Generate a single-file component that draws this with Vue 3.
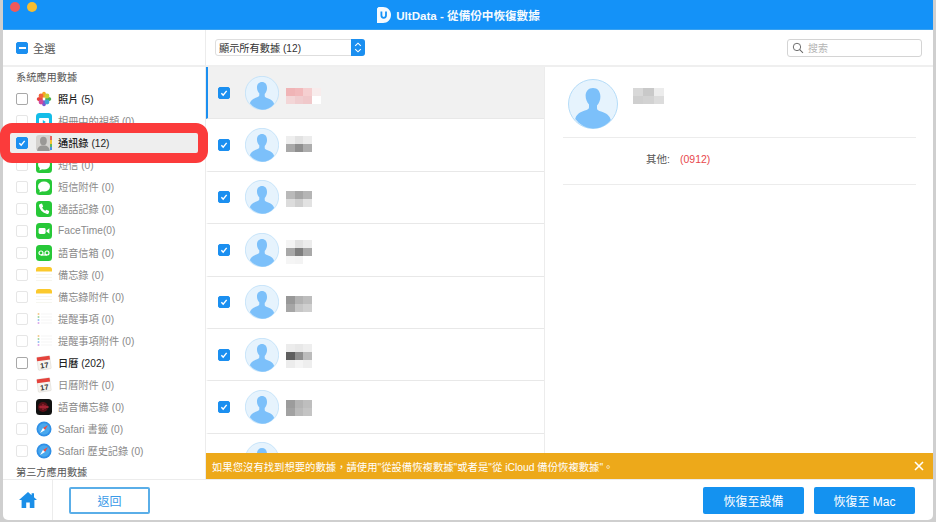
<script setup>
const systemRows = [
  { icon: 'photos', label: '照片 (5)', on: true },
  { icon: 'video', label: '相冊中的視頻 (0)' },
  { icon: 'contacts', label: '通訊錄 (12)', on: true, checked: true },
  { icon: 'message', label: '短信 (0)' },
  { icon: 'message', label: '短信附件 (0)' },
  { icon: 'phone', label: '通話記錄 (0)' },
  { icon: 'facetime', label: 'FaceTime(0)' },
  { icon: 'voicemail', label: '語音信箱 (0)' },
  { icon: 'notes', label: '備忘錄 (0)' },
  { icon: 'notes', label: '備忘錄附件 (0)' },
  { icon: 'reminders', label: '提醒事項 (0)' },
  { icon: 'reminders', label: '提醒事項附件 (0)' },
  { icon: 'calendar', label: '日曆 (202)', on: true },
  { icon: 'calendar', label: '日曆附件 (0)' },
  { icon: 'memo', label: '語音備忘錄 (0)' },
  { icon: 'safari', label: 'Safari 書籤 (0)' },
  { icon: 'safari', label: 'Safari 歷史記錄 (0)' }
]

// blurred names: top is the shift from the row centre, lines are the mosaic colours
const contacts = [
  { top: 6, lines: [['#f0b4b6', '#f2b9bb', '#f5cfd0', '#f8ecec'], ['#f3d6d7', '#f0cdcf', '#f0c8ca', '#fff']] },
  { top: -2, lines: [['#eeeeee', '#e2e2e2', '#ececec'], ['#a9a9a9', '#8f8f8f', '#adadad']] },
  { top: 4, lines: [['#b9b9b9', '#a6a6a6', '#b5b5b5'], ['#dcdcdc', '#cfcfcf', '#e2e2e2']] },
  { top: 4, lines: [['#f4f4f4', '#e2e2e2', '#ececec'], ['#a8a8a8', '#7f7f7f', '#a9a9a9'], ['#f5f5f5', '#f3f3f3', '#fff']] },
  { top: 4, lines: [['#989898', '#b2b2b2', '#bdbdbd'], ['#a6a6a6', '#c6c6c6', '#cfcfcf']] },
  { top: 2, lines: [['#ececec', '#e8e8e8', '#eeeeee'], ['#5f5f5f', '#8f8f8f', '#bcbcbc'], ['#ececec', '#f4f4f4', '#eeeeee']] },
  { top: 2, lines: [['#9c9c9c', '#b4b4b4', '#bebebe'], ['#a2a2a2', '#bababa', '#c4c4c4']] },
  { top: 0, lines: [] }
]

const detailName = [['#d8d8d8', '#c9c9c9', '#ececec'], ['#cfcfcf', '#d2d2d2', '#dcdcdc']]
</script>

<template>
  <div class="screen">
    <div class="window">
      <header class="titlebar">
        <span class="light light--red"></span>
        <span class="light light--yellow"></span>
        <div class="title">
          <svg class="logo" viewBox="0 0 14 16">
            <path d="M0 1.5 1.5 0H6c4.500 0 8 3.400 8 8s-3.500 8-8 8H0z" fill="#fff" />
            <path d="M4.400 4.500v3.800c0 1.600 1 2.500 2.300 2.500S9 9.900 9 8.300V4.500" fill="none" stroke="#1492f8" stroke-width="1.800" />
          </svg>
          <span>UltData - 從備份中恢復數據</span>
        </div>
      </header>

      <div class="main">
        <aside class="sidebar">
          <div class="select-all">
            <span class="check check--mixed"></span>
            <span>全選</span>
          </div>
          <div class="side-list">
            <div class="group">系統應用數據</div>
            <div
              v-for="row in systemRows"
              :key="row.label"
              class="side-row"
              :class="{ 'side-row--on': row.on, 'side-row--checked': row.checked }"
            >
              <span class="check" :class="{ 'check--on': row.checked }">
                <svg v-if="row.checked" viewBox="0 0 12 12"><path d="M2.800 6.300 5 8.500l4.200-5" fill="none" stroke="#fff" stroke-width="1.700" /></svg>
              </span>
              <svg class="app-icon" viewBox="0 0 16 16">
                <template v-if="row.icon === 'photos'">
                  <ellipse cx="8" cy="3.800" rx="2" ry="3" fill="#f5a623" />
                  <ellipse cx="8" cy="12.200" rx="2" ry="3" fill="#7a5bd0" />
                  <ellipse cx="3.800" cy="8" rx="3" ry="2" fill="#e8413c" />
                  <ellipse cx="12.200" cy="8" rx="3" ry="2" fill="#4cb050" />
                  <circle cx="5" cy="5" r="2.400" fill="#f0643c" />
                  <circle cx="11" cy="5" r="2.400" fill="#c8d035" />
                  <circle cx="5" cy="11" r="2.400" fill="#d04a9c" />
                  <circle cx="11" cy="11" r="2.400" fill="#3fa6d8" />
                </template>
                <template v-else-if="row.icon === 'video'">
                  <rect width="16" height="16" rx="3.500" fill="#14bde8" />
                  <rect x="3" y="5" width="10" height="8" rx="1" fill="#fff" />
                  <path d="M6.800 7v4l3-2z" fill="#14bde8" />
                </template>
                <template v-else-if="row.icon === 'contacts'">
                  <rect width="16" height="16" rx="3" fill="#d4d2cf" />
                  <path d="M14 1h2v4h-2z" fill="#e8625a" />
                  <path d="M14 5h2v4h-2z" fill="#f2c230" />
                  <path d="M14 9h2v3h-2z" fill="#5cb85c" />
                  <path d="M14 12h2v3h-2z" fill="#4a90e2" />
                  <ellipse cx="7.400" cy="6" rx="3.400" ry="4.200" fill="#9a9896" />
                  <path d="M1.200 16c0-3.400 2.400-4.800 4.400-5.400h3.600c2 .6 4.400 2 4.400 5.400z" fill="#9a9896" />
                </template>
                <template v-else-if="row.icon === 'message'">
                  <rect width="16" height="16" rx="3.500" fill="#27c838" />
                  <ellipse cx="8" cy="7.600" rx="6" ry="5" fill="#fff" />
                  <path d="M4 10.500 3.400 13.600 7 11.800z" fill="#fff" />
                </template>
                <template v-else-if="row.icon === 'phone'">
                  <rect width="16" height="16" rx="3.500" fill="#27c838" />
                  <path d="M4.200 3 6 2.600l1.200 2.800-1 1c.6 1.500 1.600 2.600 3.200 3.400l1-1 2.800 1.300-.4 1.800c-.2.800-1 1.200-1.800 1C6.400 11.700 3.900 8.900 3 4.800 2.900 4 3.400 3.200 4.200 3z" fill="#fff" />
                </template>
                <template v-else-if="row.icon === 'facetime'">
                  <rect width="16" height="16" rx="3.500" fill="#27c838" />
                  <rect x="2.600" y="5" width="7" height="6" rx="1.400" fill="#fff" />
                  <path d="M10.400 7.400 13.400 5.200v5.600L10.400 8.600z" fill="#fff" />
                </template>
                <template v-else-if="row.icon === 'voicemail'">
                  <rect width="16" height="16" rx="3.500" fill="#27c838" />
                  <circle cx="5" cy="8" r="2" fill="none" stroke="#fff" stroke-width="1.200" />
                  <circle cx="11" cy="8" r="2" fill="none" stroke="#fff" stroke-width="1.200" />
                  <path d="M5 10h6" stroke="#fff" stroke-width="1.200" />
                </template>
                <template v-else-if="row.icon === 'notes'">
                  <path d="M0 4.500V2.500A2.500 2.500 0 0 1 2.500 0h11A2.500 2.500 0 0 1 16 2.500v2z" fill="#fbc92c" />
                  <path d="M0 7.500h16M0 10.500h16M0 13.500h16" stroke="#f2f2ea" stroke-width=".7" />
                </template>
                <template v-else-if="row.icon === 'reminders'">
                  <circle cx="2.500" cy="3" r="1" fill="#f5c98c" />
                  <circle cx="2.500" cy="6" r="1" fill="#9ed49e" />
                  <circle cx="2.500" cy="9" r="1" fill="#94bff0" />
                  <circle cx="2.500" cy="12" r="1" fill="#d9a9e8" />
                  <path d="M5 3h11M5 6h11M5 9h11M5 12h11" stroke="#f0f0f0" stroke-width=".7" />
                </template>
                <template v-else-if="row.icon === 'calendar'">
                  <g transform="rotate(-8 8 8)">
                    <rect x="1.500" y="1.500" width="13" height="13" rx="1" fill="#f6f4f0" stroke="#d8d5d0" stroke-width=".5" />
                    <rect x="1.500" y="1.500" width="13" height="3.800" fill="#e4433c" />
                    <text x="8" y="13" text-anchor="middle" font-size="7.500" font-weight="700" fill="#333">17</text>
                  </g>
                </template>
                <template v-else-if="row.icon === 'memo'">
                  <rect width="16" height="16" rx="3.500" fill="#111" />
                  <circle cx="7" cy="8" r="5" fill="#5a1018" />
                  <path d="M3 8h10M5 6.500v3M7 5v6M9 6v4M11 7v2" stroke="#e0334a" stroke-width=".7" />
                </template>
                <template v-else-if="row.icon === 'safari'">
                  <circle cx="8" cy="8" r="7.500" fill="#2f8fe6" />
                  <circle cx="8" cy="8" r="5.800" fill="#48a8ee" />
                  <path d="M12 4 9 9 7 7z" fill="#ee4a42" />
                  <path d="M4 12 7 7 9 9z" fill="#fff" />
                </template>
              </svg>
              <span class="side-label">{{ row.label }}</span>
            </div>
            <div class="group">第三方應用數據</div>
          </div>
        </aside>

        <section class="content">
          <div class="toolbar">
            <div class="select">
              <span class="select-text">顯示所有數據 (12)</span>
              <span class="stepper">
                <svg viewBox="0 0 14 18"><path d="M4 7.200 7 4.400l3 2.800M4 10.800l3 2.800 3-2.800" fill="none" stroke="#fff" stroke-width="1.200" /></svg>
              </span>
            </div>
            <div class="search">
              <svg viewBox="0 0 14 14"><circle cx="5.800" cy="5.800" r="4.300" fill="none" stroke="#666" stroke-width="1.100" /><path d="m9 9 3.800 3.800" stroke="#666" stroke-width="1.200" /></svg>
              <span>搜索</span>
            </div>
          </div>

          <div class="panes">
            <div class="contacts">
              <div
                v-for="(person, i) in contacts"
                :key="i"
                class="contact"
                :class="{ 'contact--active': i === 0 }"
              >
                <span class="check check--on">
                  <svg viewBox="0 0 12 12"><path d="M2.800 6.300 5 8.500l4.200-5" fill="none" stroke="#fff" stroke-width="1.700" /></svg>
                </span>
                <svg class="avatar" viewBox="0 0 50 50">
                  <circle cx="25" cy="25" r="24.500" fill="#e6f3fd" stroke="#b5dcf8" />
                  <path d="M25 9c-4.600 0-7.400 3.400-7.400 7.800 0 3.400 1.400 6.600 3.400 8.600v3c0 1.500-1.600 2.300-4.200 3.200-5.400 1.800-8.600 4.300-9.600 8.400A24.200 24.200 0 0 0 25 49.500c7.200 0 13.600-3.100 17.800-8.500-1-4.100-4.200-6.600-9.600-8.400-2.600-.9-4.200-1.700-4.200-3.200v-3c2-2 3.400-5.200 3.400-8.600C32.400 12.400 29.600 9 25 9z" fill="#7cc0fa" />
                </svg>
                <div class="mosaic" :style="{ marginTop: person.top + 'px' }">
                  <div v-for="(line, l) in person.lines" :key="l" class="mosaic-line">
                    <i v-for="(c, k) in line" :key="k" :style="{ background: c }"></i>
                  </div>
                </div>
              </div>
            </div>

            <div class="detail">
              <div class="detail-head">
                <svg class="avatar avatar--big" viewBox="0 0 50 50">
                  <circle cx="25" cy="25" r="24.500" fill="#e6f3fd" stroke="#b5dcf8" />
                  <path d="M25 9c-4.600 0-7.400 3.400-7.400 7.800 0 3.400 1.400 6.600 3.400 8.600v3c0 1.500-1.600 2.300-4.200 3.200-5.400 1.800-8.600 4.300-9.600 8.400A24.200 24.200 0 0 0 25 49.500c7.200 0 13.600-3.100 17.800-8.500-1-4.100-4.200-6.600-9.600-8.400-2.600-.9-4.200-1.700-4.200-3.200v-3c2-2 3.400-5.200 3.400-8.600C32.400 12.400 29.600 9 25 9z" fill="#7cc0fa" />
                </svg>
                <div class="mosaic mosaic--detail">
                  <div v-for="(line, l) in detailName" :key="l" class="mosaic-line">
                    <i v-for="(c, k) in line" :key="k" :style="{ background: c }"></i>
                  </div>
                </div>
              </div>
              <div class="detail-row">
                <span class="detail-key">其他:</span>
                <span class="detail-value">(0912)</span>
              </div>
            </div>
          </div>

          <div class="banner">
            <span>如果您沒有找到想要的數據，請使用"從設備恢複數據"或者是"從 iCloud 備份恢複數據"。</span>
            <svg viewBox="0 0 10 10"><path d="m1 1 8 8M9 1 1 9" stroke="#fff" stroke-width="1.600" /></svg>
          </div>
        </section>
      </div>

      <footer class="footer">
        <div class="home">
          <svg viewBox="0 0 18 16"><path d="M9 0 0 8h2.600v8h4.600v-5.400h3.600V16h4.600V8H18l-3-2.700V1.200h-2.400v2z" fill="#1b8fe8" /></svg>
        </div>
        <button class="back">返回</button>
        <div class="actions">
          <button class="primary">恢復至設備</button>
          <button class="primary">恢復至 Mac</button>
        </div>
      </footer>

      <div class="callout"></div>
    </div>
  </div>
</template>

<style>
html,
body {
  margin: 0;
}
</style>

<style scoped>
.screen {
  width: 936px;
  height: 522px;
  background: #cfcfcf;
  padding: 0 3px 2px;
  box-sizing: border-box;
  overflow: hidden;
  font-family: "Liberation Sans", "Noto Sans CJK TC", sans-serif;
}

.window {
  height: 520px;
  background: #fff;
  border-radius: 0 0 5px 5px;
  display: flex;
  flex-direction: column;
  position: relative;
}

.titlebar {
  height: 30px;
  flex: none;
  box-sizing: border-box;
  background: #1492f8;
  display: flex;
  align-items: center;
  justify-content: center;
  border-bottom: 1px solid #3aa2f0;
  position: relative;
}

.light {
  position: absolute;
  top: 2px;
  width: 10px;
  height: 10px;
  border-radius: 50%;
}

.light--red {
  left: 7px;
  background: #f0595a;
}

.light--yellow {
  left: 24px;
  background: #f6bd31;
}

.title {
  display: flex;
  align-items: center;
  gap: 5px;
  color: #fff;
  font-size: 11.6px;
  font-weight: 700;
  margin-left: -19px;
  opacity: 0.96;
}

.logo {
  width: 14px;
  height: 16px;
}

.main {
  flex: 1;
  min-height: 0;
  display: flex;
}

.sidebar {
  width: 202px;
  flex: none;
  border-right: 1px solid #ececec;
  display: flex;
  flex-direction: column;
  overflow: hidden;
}

.select-all {
  height: 37px;
  flex: none;
  display: flex;
  align-items: center;
  gap: 5px;
  padding-left: 13px;
  font-size: 11.3px;
  color: #555;
  border-bottom: 2px solid #efefef;
  box-sizing: border-box;
}

.side-list {
  flex: 1;
  overflow: hidden;
}

.group {
  height: 21px;
  line-height: 21px;
  padding-left: 13px;
  font-size: 10.2px;
  color: #555;
}

.side-row {
  height: 22px;
  display: flex;
  align-items: center;
  padding-left: 13px;
  font-size: 10.2px;
  color: #8a8a8a;
}

.side-row .check {
  border-color: #e6e6e6;
}

.side-row--on {
  color: #222;
  font-weight: 500;
}

.side-row--on .check {
  border-color: #a8a8a8;
}

.side-row--checked {
  margin-right: 4px;
  background: #eeeeee;
}

.app-icon {
  width: 16px;
  height: 16px;
  margin-left: 8px;
  flex: none;
}

.side-label {
  margin-left: 6px;
  margin-bottom: 2px;
  white-space: nowrap;
}

.check {
  width: 12px;
  height: 12px;
  flex: none;
  box-sizing: border-box;
  border: 1px solid #b0b0b0;
  border-radius: 2px;
  background: #fff;
  display: inline-flex;
  align-items: center;
  justify-content: center;
}

.check svg {
  width: 12px;
  height: 12px;
}

.check--on,
.side-row--on .check--on {
  background: #1b8ff0;
  border-color: #1b8ff0;
}

.check--mixed {
  background: #1b8ff0;
  border-color: #1b8ff0;
}

.check--mixed::after {
  content: "";
  width: 7px;
  height: 2px;
  background: #fff;
}

.content {
  flex: 1;
  min-width: 0;
  display: flex;
  flex-direction: column;
}

.toolbar {
  height: 37px;
  flex: none;
  box-sizing: border-box;
  display: flex;
  align-items: center;
  justify-content: space-between;
  padding: 0 11px 0 9px;
  border-bottom: 2px solid #efefef;
}

.select {
  width: 150px;
  height: 17px;
  box-sizing: border-box;
  border: 1px solid #dedede;
  border-radius: 3px;
  display: flex;
  align-items: center;
  justify-content: space-between;
  font-size: 10.2px;
  color: #333;
}

.select-text {
  padding-left: 3px;
}

.stepper {
  width: 14px;
  height: 17px;
  margin-right: -1px;
  background: #1b8ff0;
  border-radius: 0 3px 3px 0;
  display: flex;
}

.stepper svg {
  width: 14px;
  height: 17px;
}

.search {
  width: 135px;
  height: 18px;
  box-sizing: border-box;
  border: 1px solid #d4d4d4;
  border-radius: 3px;
  display: flex;
  align-items: center;
  gap: 4px;
  padding-left: 4px;
  font-size: 10px;
  color: #b5b5b5;
}

.search svg {
  width: 12px;
  height: 12px;
}

.panes {
  flex: 1;
  min-height: 0;
  display: flex;
}

.contacts {
  width: 339px;
  flex: none;
  box-sizing: border-box;
  border-right: 1px solid #ececec;
  overflow: hidden;
}

.contact {
  height: 52.4px;
  box-sizing: border-box;
  border-bottom: 1px solid #e8e8e8;
  border-left: 2px solid transparent;
  display: flex;
  align-items: center;
  padding-left: 10px;
}

.contact--active {
  background: #f1f1f1;
  border-left-color: #1b8ff0;
}

.avatar {
  width: 34px;
  height: 34px;
  margin-left: 15px;
  flex: none;
}

.avatar--big {
  width: 50px;
  height: 50px;
  margin-left: 0;
}

.mosaic {
  margin-left: 7px;
}

.mosaic--detail {
  margin-left: 15px;
  margin-top: 9px;
}

.mosaic-line {
  display: flex;
}

.mosaic-line i {
  display: block;
  width: 8.67px;
  height: 8px;
}

.mosaic--detail .mosaic-line i {
  width: 10.3px;
}

.detail {
  flex: 1;
  min-width: 0;
  padding: 12px 17px 0 18px;
}

.detail-head {
  height: 59px;
  box-sizing: border-box;
  padding-left: 5px;
  display: flex;
  align-items: flex-start;
  border-bottom: 1px solid #ececec;
}

.detail-row {
  height: 47px;
  box-sizing: border-box;
  padding-bottom: 5px;
  border-bottom: 1px solid #ececec;
  display: flex;
  align-items: center;
  padding-left: 83px;
  font-size: 10.5px;
}

.detail-key {
  color: #555;
  width: 34px;
}

.detail-value {
  color: #e8474c;
}

.banner {
  height: 26px;
  flex: none;
  background: #eda91a;
  color: #fff;
  font-size: 10.35px;
  display: flex;
  align-items: center;
  justify-content: space-between;
  padding: 0 9px 0 6px;
}

.banner svg {
  width: 10px;
  height: 10px;
}

.footer {
  height: 41px;
  flex: none;
  display: flex;
  align-items: center;
  border-top: 1px solid #ececec;
  box-sizing: border-box;
}

.home {
  width: 50px;
  height: 100%;
  box-sizing: border-box;
  border-right: 1px solid #ececec;
  display: flex;
  align-items: center;
  justify-content: center;
}

.home svg {
  width: 18px;
  height: 16px;
}

.back {
  width: 81px;
  height: 27px;
  margin-left: 16px;
  background: #fff;
  border: 2px solid #5aaee8;
  border-radius: 2px;
  color: #3a9ae8;
  font: inherit;
  font-size: 12px;
  padding: 0;
}

.actions {
  margin-left: auto;
  display: flex;
  gap: 10px;
  padding-right: 18px;
}

.primary {
  width: 101px;
  height: 27px;
  border: 0;
  border-radius: 2px;
  background: #1492f0;
  color: #fff;
  font: inherit;
  font-size: 12px;
  padding: 0;
}

.callout {
  position: absolute;
  left: -3px;
  top: 123px;
  width: 208px;
  height: 40px;
  box-sizing: border-box;
  border: 10px solid #fb3b3b;
  border-radius: 12px;
  pointer-events: none;
}
</style>
